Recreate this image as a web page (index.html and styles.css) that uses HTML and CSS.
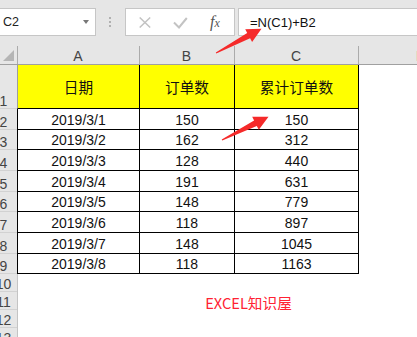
FILE: index.html
```html
<!DOCTYPE html>
<html lang="zh">
<head>
<meta charset="utf-8">
<title>EXCEL</title>
<link rel="stylesheet" href="styles.css">
</head>
<body>
<div class="sheet">
  <div class="toolbar">
    <div class="namebox"><span class="nb-text">C2</span><i class="caret"></i></div>
    <div class="dots"><i></i><i></i><i></i></div>
    <div class="btnbox">
      <svg class="ic-x" width="12" height="11" viewBox="0 0 12 11"><path d="M0.7 0.5 L11.2 10.5 M11.2 0.5 L0.7 10.5" fill="none" stroke="#c3c3c3" stroke-width="1.5"/></svg>
      <svg class="ic-ok" width="15" height="12" viewBox="0 0 15 12"><path d="M1 5.5 L6 10.5 L13.8 1" fill="none" stroke="#c3c3c3" stroke-width="2"/></svg>
      <span class="fx"><span class="fx-f">f</span><span class="fx-x">x</span></span>
    </div>
    <div class="formula">=N(C1)+B2</div>
  </div>

  <div class="grid">
    <div class="row hdr">
      <div class="corner"><i class="tri"></i></div>
      <div class="ch">A</div>
      <div class="ch">B</div>
      <div class="ch">C</div>
      <div class="ch">D</div>
    </div>

    <div class="row r-title">
      <div class="rh"><span>1</span></div>
      <div class="c y first-title cjk">日期</div>
      <div class="c y cjk">订单数</div>
      <div class="c y cjk">累计订单数</div>
      <div class="d edge"></div>
    </div>

    <div class="row r-data"><div class="rh"><span>2</span></div><div class="c">2019/3/1</div><div class="c">150</div><div class="c">150</div><div class="d edge"></div></div>
    <div class="row r-data"><div class="rh"><span>3</span></div><div class="c">2019/3/2</div><div class="c">162</div><div class="c">312</div><div class="d edge"></div></div>
    <div class="row r-data"><div class="rh"><span>4</span></div><div class="c">2019/3/3</div><div class="c">128</div><div class="c">440</div><div class="d edge"></div></div>
    <div class="row r-data"><div class="rh"><span>5</span></div><div class="c">2019/3/4</div><div class="c">191</div><div class="c">631</div><div class="d edge"></div></div>
    <div class="row r-data"><div class="rh"><span>6</span></div><div class="c">2019/3/5</div><div class="c">148</div><div class="c">779</div><div class="d edge"></div></div>
    <div class="row r-data"><div class="rh"><span>7</span></div><div class="c">2019/3/6</div><div class="c">118</div><div class="c">897</div><div class="d edge"></div></div>
    <div class="row r-data"><div class="rh"><span>8</span></div><div class="c">2019/3/7</div><div class="c">148</div><div class="c">1045</div><div class="d edge"></div></div>
    <div class="row r-data"><div class="rh"><span>9</span></div><div class="c">2019/3/8</div><div class="c">118</div><div class="c">1163</div><div class="d edge"></div></div>

    <div class="row r-empty"><div class="rh"><span>10</span></div><div class="e first"></div><div class="e"></div><div class="e"></div><div class="e"></div></div>
    <div class="row r-empty"><div class="rh"><span>11</span></div><div class="e first"></div><div class="e span2 brand">EXCEL知识屋</div><div class="e"></div></div>
    <div class="row r-empty"><div class="rh"><span>12</span></div><div class="e first"></div><div class="e"></div><div class="e"></div><div class="e"></div></div>
    <div class="row r-empty"><div class="rh"><span>13</span></div><div class="e first"></div><div class="e"></div><div class="e"></div><div class="e"></div></div>
  </div>

  <svg class="arrows" width="417" height="337" viewBox="0 0 417 337">
    <polygon points="215.8,52.4 247.2,32.9 245.2,29.2 261.5,28.8 252.1,42 250.1,38.3 216.3,53.6" fill="#f52a2a"/>
    <polygon points="221.7,139.4 254.1,120.6 252.2,116.8 268.5,116.8 258.8,129.8 256.8,125.9 222.3,140.6" fill="#f52a2a"/>
  </svg>
</div>
</body>
</html>
```

FILE: styles.css
```css
html, body {
  margin: 0;
  padding: 0;
  background: #ffffff;
}

.sheet {
  position: relative;
  width: 417px;
  height: 337px;
  overflow: hidden;
  font-family: "Liberation Sans", "Noto Sans CJK SC", sans-serif;
  color: #111;
}

/* ---------- formula bar ---------- */
.toolbar {
  height: 40px;
  box-sizing: border-box;
  padding-top: 8px;
  background: #e6e6e6;
  display: flex;
  align-items: flex-start;
}

.namebox {
  width: 97px;
  height: 28px;
  margin-left: -1px;
  box-sizing: border-box;
  border: 1px solid #c6c6c6;
  background: #fff;
  display: flex;
  align-items: center;
  padding-left: 3px;
}

.nb-text {
  font-size: 12.5px;
  color: #222;
}

.caret {
  margin-left: auto;
  margin-right: 6px;
  width: 0;
  height: 0;
  border-left: 3.5px solid transparent;
  border-right: 3.5px solid transparent;
  border-top: 4px solid #777;
}

.dots {
  margin-left: 13px;
  margin-top: 9px;
  display: flex;
  flex-direction: column;
  gap: 2px;
}

.dots i {
  display: block;
  width: 2px;
  height: 2px;
  background: #b0b0b0;
}

.btnbox {
  margin-left: 14px;
  width: 110px;
  height: 28px;
  box-sizing: border-box;
  border: 1px solid #c6c6c6;
  background: #fff;
  display: flex;
  align-items: center;
  padding-left: 13px;
}

.ic-x {
  display: block;
  margin-top: 0px;
}

.ic-ok {
  display: block;
  margin-left: 22px;
  margin-top: 2px;
}

.fx {
  margin-left: 22px;
  font-family: "Liberation Serif", serif;
  font-style: italic;
  color: #555;
  line-height: 14px;
}

.fx-f {
  font-size: 16px;
}

.fx-x {
  font-size: 12px;
}

.formula {
  flex: 1;
  margin-left: 3px;
  margin-right: -1px;
  height: 28px;
  box-sizing: border-box;
  border: 1px solid #c6c6c6;
  background: #fff;
  display: flex;
  align-items: center;
  padding-left: 11px;
  font-size: 13px;
  color: #111;
}

/* ---------- sheet grid ---------- */
.row {
  display: grid;
  grid-template-columns: 17px 122px 95px 124px 126px;
}

.row > div {
  box-sizing: border-box;
  display: flex;
  align-items: flex-end;
  justify-content: center;
  font-size: 14px;
  line-height: 13px;
}

.hdr {
  height: 25px;
}

.corner,
.ch {
  background: #e6e6e6;
  border-bottom: 1px solid #a0a0a0;
}

.corner {
  justify-content: flex-end !important;
  padding: 0 3px 3px 0;
}

.tri {
  display: block;
  width: 0;
  height: 0;
  border-left: 11px solid transparent;
  border-bottom: 11px solid #b5b5b5;
}

.ch {
  color: #444;
  padding-bottom: 1px;
  background-image: linear-gradient(#ababab, #ababab);
  background-repeat: no-repeat;
  background-size: 1px 100%;
  background-position: 0 6px;
}

.rh {
  background: #e6e6e6;
  border-bottom: 1px solid #d2d2d2;
  overflow: hidden;
  justify-content: flex-start !important;
  color: #444;
}

.rh span {
  display: block;
  flex: none;
  width: 27px;
  margin-left: -10px;
  text-align: center;
}

.r-title {
  height: 44px;
}

.r-data {
  height: 20.67px;
}

.r-empty {
  height: 18px;
}

.c {
  border-left: 1px solid #000;
  border-bottom: 1px solid #000;
  color: #111;
  padding-bottom: 2px;
}

.y {
  background: #ffff00;
  align-items: center !important;
  padding: 3px 0 0 0 !important;
}

.first-title {
  border-left-color: #9e9e9e;
}

.cjk {
  font-size: 14.67px !important;
}

.d {
  background: #fff;
}

.edge {
  border-left: 1px solid #000;
}

.e {
  background: #fff;
}

.e.first {
  border-left: 1px solid #c4c4c4;
}

.span2 {
  grid-column: span 2;
}

.brand {
  font-family: "Noto Sans CJK SC", sans-serif;
  font-size: 14.67px !important;
  color: #ff2233;
  padding-bottom: 1px;
}

.r-data .rh span,
.r-empty .rh span,
.r-title .rh span {
  padding-bottom: 0;
}

/* ---------- annotation arrows ---------- */
.arrows {
  position: absolute;
  left: 0;
  top: 0;
  pointer-events: none;
}
```
